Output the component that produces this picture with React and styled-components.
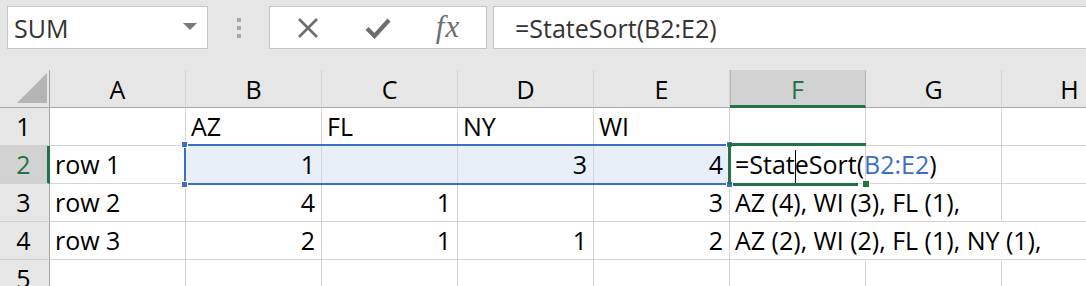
import styled, { createGlobalStyle } from "styled-components";

const GlobalStyle = createGlobalStyle`
    html, body {
        margin: 0;
        padding: 0;
        background: #ffffff;
    }
    body {
        font-family: "Open Sans", "Noto Sans", sans-serif;
    }
`;

const GREEN = "#217346";
const BLUE = "#3b6fc6";

const Page = styled.div`
    width: 1086px;
    height: 286px;
    overflow: hidden;
    background: #ffffff;
`;

const TopBar = styled.div`
    height: 70px;
    box-sizing: border-box;
    background: #e6e6e6;
    display: flex;
    align-items: flex-start;
    padding: 6px 0 0 7px;
`;

const Box = styled.div`
    height: 43px;
    box-sizing: border-box;
    border: 1px solid #c6c6c6;
    background: #ffffff;
    display: flex;
    align-items: center;
    color: #333333;
    font-size: 25px;
`;

const NameBox = styled(Box)`
    width: 201px;
    justify-content: space-between;
    padding: 0 10px 0 6px;
`;

const Caret = styled.div`
    width: 0;
    height: 0;
    border-left: 7px solid transparent;
    border-right: 7px solid transparent;
    border-top: 7px solid #7a7a7a;
    margin-top: -2px;
`;

const Grip = styled.div`
    width: 61px;
    height: 43px;
    display: flex;
    flex-direction: column;
    align-items: center;
    justify-content: center;
    gap: 4px;
`;

const GripDot = styled.span`
    width: 4px;
    height: 4px;
    background: #a8a8a8;
`;

const Buttons = styled(Box)`
    width: 218px;
    padding-left: 3px;
`;

const IconButton = styled.div`
    width: 70px;
    height: 100%;
    display: flex;
    align-items: center;
    justify-content: center;
    color: #6e6e6e;
`;

const Fx = styled.span`
    font-family: "Liberation Serif", "DejaVu Serif", serif;
    font-style: italic;
    font-size: 31px;
    color: #6e6e6e;
    margin-top: -2px;
    letter-spacing: 1px;
`;

const FormulaBox = styled(Box)`
    flex: 1;
    margin-left: 6px;
    margin-right: -10px;
    padding-left: 21px;
`;

const Sheet = styled.div`
    display: grid;
    grid-template-columns: 50px repeat(8, 136px);
    grid-template-rows: repeat(6, 38px);
    font-size: 25px;
    color: #000000;
`;

const Corner = styled.div`
    grid-row: 1;
    grid-column: 1;
    box-sizing: border-box;
    background: #e6e6e6;
    border-right: 1px solid #a6a6a6;
    border-bottom: 1px solid #a6a6a6;
    display: flex;
    align-items: flex-end;
    justify-content: flex-end;
    padding: 0 2px 4px 0;
`;

const CornerMark = styled.div`
    width: 30px;
    height: 30px;
    background: #b4b4b4;
    clip-path: polygon(100% 0, 100% 100%, 0 100%);
`;

const ColHead = styled.div`
    grid-row: 1;
    grid-column: ${(p) => p.$c};
    box-sizing: border-box;
    background: ${(p) => (p.$active ? "#d2d2d2" : "#e6e6e6")};
    color: ${(p) => (p.$active ? GREEN : "#000000")};
    border-right: 1px solid ${(p) => (p.$active ? "#b8b8b8" : "#d2d2d2")};
    border-bottom: ${(p) => (p.$active ? `3px solid ${GREEN}` : "1px solid #a6a6a6")};
    box-shadow: ${(p) => (p.$active ? "inset 1px 0 #b8b8b8" : "none")};
    display: flex;
    align-items: center;
    justify-content: center;
    line-height: 34px;
    padding-top: ${(p) => (p.$active ? "2px" : "0")};
`;

const RowHead = styled.div`
    grid-row: ${(p) => p.$r};
    grid-column: 1;
    box-sizing: border-box;
    background: ${(p) => (p.$active ? "#d2d2d2" : "#e6e6e6")};
    color: ${(p) => (p.$active ? GREEN : "#000000")};
    border-right: ${(p) => (p.$active ? `3px solid ${GREEN}` : "1px solid #a6a6a6")};
    border-bottom: 1px solid #d0d0d0;
    display: flex;
    align-items: flex-end;
    justify-content: center;
    line-height: 34px;
    padding: 0 ${(p) => (p.$active ? "0" : "2px")} 2px 0;
`;

const Cell = styled.div`
    grid-row: ${(p) => p.$r};
    grid-column: ${(p) => p.$c};
    box-sizing: border-box;
    border-right: 1px solid ${(p) => (p.$noRight ? "transparent" : "#d4d4d4")};
    border-bottom: 1px solid #d4d4d4;
    background: ${(p) => (p.$selected ? "#e9eff8" : "transparent")};
    display: flex;
    align-items: flex-end;
    justify-content: ${(p) => (p.$num ? "flex-end" : "flex-start")};
    padding: 0 6px 2px 5px;
    white-space: nowrap;
    line-height: 34px;
    min-width: 0;
`;

const Selection = styled.div`
    grid-row: 3;
    grid-column: 3 / 7;
    position: relative;
    z-index: 2;
    pointer-events: none;
    border: 2px solid ${BLUE};
    margin: -2px 0 -1px -2px;
`;

const Handle = styled.span`
    position: absolute;
    width: 5px;
    height: 5px;
    background: ${(p) => p.$color};
    border: 1px solid #ffffff;
    ${(p) => (p.$top ? "top: -5px;" : "bottom: -5px;")}
    ${(p) => (p.$left ? "left: -5px;" : "right: -5px;")}
`;

const ActiveFrame = styled.div`
    grid-row: 3;
    grid-column: 7;
    position: relative;
    z-index: 3;
    pointer-events: none;
    border-top: 3px solid ${GREEN};
    border-left: 3px solid ${GREEN};
    margin: -3px 0 0 -2px;
`;

const FrameBottom = styled.span`
    position: absolute;
    left: 2px;
    right: 8px;
    bottom: -2px;
    height: 3px;
    background: ${GREEN};
`;

const FillHandle = styled.span`
    position: absolute;
    right: -4px;
    bottom: -4px;
    width: 6px;
    height: 6px;
    background: ${GREEN};
    border: 1px solid #ffffff;
`;

const TextCaret = styled.span`
    display: inline-block;
    width: 1px;
    height: 36px;
    margin: 0 -1px -6px 0;
    background: #000000;
    vertical-align: bottom;
    position: relative;
    top: -1px;
`;

const Ref = styled.span`
    color: ${BLUE};
`;

const XIcon = () => (
    <svg width="22" height="22" viewBox="0 0 22 22">
        <path d="M2 2 L20 20 M20 2 L2 20" stroke="#6e6e6e" strokeWidth="2.6" fill="none" />
    </svg>
);

const CheckIcon = () => (
    <svg width="26" height="22" viewBox="0 0 26 22">
        <path d="M2 11.5 L9.5 19 L24 3" stroke="#6e6e6e" strokeWidth="4.2" fill="none" strokeLinejoin="miter" />
    </svg>
);

const COLS = ["A", "B", "C", "D", "E", "F", "G", "H"];

const formula = (
    <span>
        =Stat<TextCaret />eSort(<Ref>B2:E2</Ref>)
    </span>
);

const ROWS = [
    ["", "AZ", "FL", "NY", "WI", "", "", ""],
    ["row 1", 1, "", 3, 4, formula, "", ""],
    ["row 2", 4, 1, "", 3, "AZ (4), WI (3), FL (1),", "", ""],
    ["row 3", 2, 1, 1, 2, "AZ (2), WI (2), FL (1), NY (1),", "", ""],
    ["", "", "", "", "", "", "", ""],
];

// gridlines Excel hides under overflowing text
const hidden = { "3-5": true, "4-5": true, "4-6": true };

const App = () => {
    return (
        <Page>
            <GlobalStyle />
            <TopBar>
                <NameBox>
                    <span>SUM</span>
                    <Caret />
                </NameBox>
                <Grip>
                    <GripDot />
                    <GripDot />
                    <GripDot />
                </Grip>
                <Buttons>
                    <IconButton><XIcon /></IconButton>
                    <IconButton><CheckIcon /></IconButton>
                    <IconButton><Fx>fx</Fx></IconButton>
                </Buttons>
                <FormulaBox>=StateSort(B2:E2)</FormulaBox>
            </TopBar>
            <Sheet>
                <Corner><CornerMark /></Corner>
                {COLS.map((c, i) => (
                    <ColHead key={c} $c={i + 2} $active={c === "F"}>{c}</ColHead>
                ))}
                {ROWS.map((row, ri) => [
                    <RowHead key={"h" + ri} $r={ri + 2} $active={ri === 1}>{ri + 1}</RowHead>,
                    ...row.map((v, ci) => (
                        <Cell
                            key={ri + "-" + ci}
                            $r={ri + 2}
                            $c={ci + 2}
                            $num={typeof v === "number"}
                            $selected={ri === 1 && ci >= 1 && ci <= 4}
                            $noRight={hidden[`${ri + 1}-${ci}`]}
                        >
                            {v}
                        </Cell>
                    )),
                ])}
                <Selection>
                    <Handle $color={BLUE} $top $left />
                    <Handle $color={BLUE} $top />
                    <Handle $color={BLUE} $left />
                    <Handle $color={BLUE} />
                </Selection>
                <ActiveFrame>
                    <FrameBottom />
                    <FillHandle />
                </ActiveFrame>
            </Sheet>
        </Page>
    );
};

export default App;
